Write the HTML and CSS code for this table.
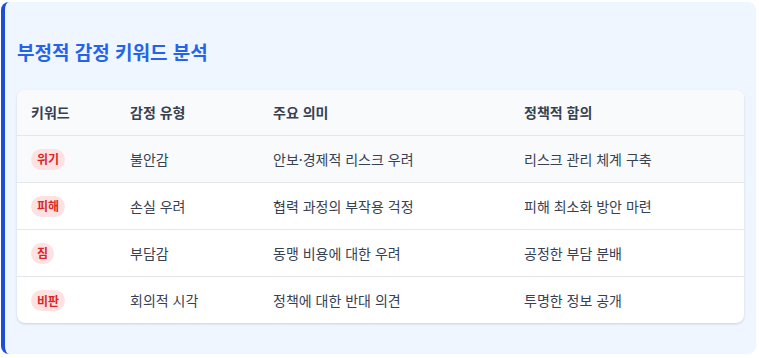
FILE: index.html
```html
<!DOCTYPE html>
<html lang="ko">
<head>
<meta charset="utf-8">
<link rel="stylesheet" href="styles.css">
</head>
<body>
<section class="panel">
  <h2 class="title">부정적 감정 키워드 분석</h2>
  <div class="table-card">
    <table class="table">
      <colgroup>
        <col class="c1"><col class="c2"><col class="c3"><col class="c4">
      </colgroup>
      <thead>
        <tr><th>키워드</th><th>감정 유형</th><th>주요 의미</th><th>정책적 함의</th></tr>
      </thead>
      <tbody>
        <tr class="hl"><td><span class="badge">위기</span></td><td>불안감</td><td>안보·경제적 리스크 우려</td><td>리스크 관리 체계 구축</td></tr>
        <tr><td><span class="badge">피해</span></td><td>손실 우려</td><td>협력 과정의 부작용 걱정</td><td>피해 최소화 방안 마련</td></tr>
        <tr><td><span class="badge">짐</span></td><td>부담감</td><td>동맹 비용에 대한 우려</td><td>공정한 부담 분배</td></tr>
        <tr><td><span class="badge">비판</span></td><td>회의적 시각</td><td>정책에 대한 반대 의견</td><td>투명한 정보 공개</td></tr>
      </tbody>
    </table>
  </div>
</section>
</body>
</html>
```

FILE: styles.css
```css
* { box-sizing: border-box; }
html, body { margin: 0; padding: 0; background: #ffffff; }
body {
  font-family: "Noto Sans CJK KR", "Noto Sans", sans-serif;
  padding: 2px 3px 4px 1px;
}
.panel {
  background: #eff6ff;
  border-left: 4px solid #1d4ed8;
  border-radius: 8px;
  padding: 36px 12px 32px 12px;
  height: 352px;
}
.title {
  margin: 0 0 24px 0;
  font-size: 19px;
  line-height: 28px;
  font-weight: 700;
  color: #2563eb;
}
.table-card {
  background: #ffffff;
  border-radius: 8px;
  box-shadow: 0 1px 3px rgba(0,0,0,0.10), 0 1px 2px rgba(0,0,0,0.06);
  overflow: hidden;
}
.table {
  width: 100%;
  border-collapse: collapse;
  table-layout: fixed;
  font-size: 14px;
  color: #374151;
}
.c1 { width: 99px; }
.c2 { width: 143px; }
.c3 { width: 251px; }
.c4 { width: auto; }
.table thead tr { height: 45px; }
.table tbody tr { height: 47px; }
.table th {
  text-align: left;
  font-weight: 700;
  color: #374151;
  background: #f9fafb;
  padding: 0 14px;
  line-height: 20px;
  vertical-align: middle;
  border-bottom: 1px solid #e5e7eb;
}
.table td {
  padding: 0 14px;
  line-height: 20px;
  vertical-align: middle;
  border-bottom: 1px solid #e5e7eb;
  color: #374151;
}
.table tbody tr:last-child td { border-bottom: none; }
.table tr.hl td { background: #f8fafc; }
.badge {
  display: inline-flex;
  align-items: center;
  height: 21px;
  background: #fee2e2;
  color: #dc2626;
  font-weight: 700;
  font-size: 12px;
  line-height: 16px;
  padding: 0 6px;
  border-radius: 11px;
  vertical-align: middle;
}
```
